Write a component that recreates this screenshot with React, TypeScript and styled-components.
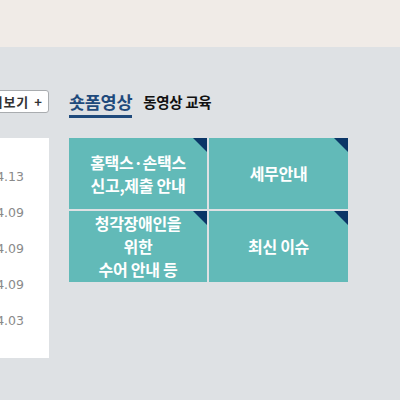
import React from 'react'
import styled, { createGlobalStyle } from 'styled-components'

const GlobalStyle = createGlobalStyle`
  html, body {
    margin: 0;
    padding: 0;
    background: #dee1e4;
    font-family: 'Noto Sans CJK KR', 'Noto Sans', sans-serif;
  }
`

const Page = styled.div`
  width: 400px;
  height: 400px;
  overflow: hidden;
`

const Banner = styled.div`
  height: 47px;
  background: #f0ebe7;
`

const Main = styled.div`
  display: flex;
  padding-top: 43px;
`

const LeftCol = styled.div`
  width: 49px;
  display: flex;
  flex-direction: column;
  align-items: flex-end;
  overflow: hidden;
`

const MoreButton = styled.div`
  flex-shrink: 0;
  height: 21px;
  padding: 0 6px 0 8px;
  display: flex;
  align-items: center;
  white-space: nowrap;
  background: #fff;
  border: 1px solid #a9acaf;
  border-radius: 3px;
  font-size: 13px;
  font-weight: 700;
  letter-spacing: 1px;
  color: #333;
`

const Plus = styled.span`
  margin-left: 5px;
  letter-spacing: 0;
`

const Panel = styled.ul`
  list-style: none;
  margin: 25px 0 0;
  padding: 31px 25px 0 0;
  width: 200px;
  flex-shrink: 0;
  height: 220px;
  background: #fff;
  box-sizing: border-box;
`

const DateItem = styled.li`
  height: 36px;
  text-align: right;
  font-family: 'DejaVu Sans', sans-serif;
  font-size: 12.5px;
  color: #8a8a8a;
  white-space: nowrap;
`

const RightCol = styled.div`
  margin-left: 20px;
  display: flex;
  flex-direction: column;
`

const Tabs = styled.div`
  display: flex;
  align-items: flex-end;
  gap: 11px;
  height: 28px;
`

const Tab = styled.div<{ $active?: boolean }>`
  font-weight: 700;
  font-size: ${p => (p.$active ? '17.5px' : '14.5px')};
  color: ${p => (p.$active ? '#1f4a7c' : '#111')};
  padding-bottom: ${p => (p.$active ? '3px' : '5px')};
  border-bottom: ${p => (p.$active ? '3px solid #1f4a7c' : '3px solid transparent')};
  line-height: 1.2;
  letter-spacing: -0.3px;
`

const Grid = styled.div`
  margin-top: 20px;
  display: grid;
  grid-template-columns: 138px 139px;
  grid-template-rows: 71px 71px;
  gap: 2px;
`

const Tile = styled.div`
  position: relative;
  display: flex;
  align-items: center;
  justify-content: center;
  text-align: center;
  background: #62bab8;
  color: #fff;
  font-weight: 700;
  font-size: 16px;
  line-height: 23px;
  letter-spacing: -0.3px;

  &::after {
    content: '';
    position: absolute;
    top: 0;
    right: 0;
    border-style: solid;
    border-width: 0 14px 14px 0;
    border-color: transparent #0b3667 transparent transparent;
  }
`

const dates = ['2024.04.13', '2024.04.09', '2024.04.09', '2024.04.09', '2024.04.03']

const tiles = [
  ['홈택스·손택스', '신고,제출 안내'],
  ['세무안내'],
  ['청각장애인을', '위한', '수어 안내 등'],
  ['최신 이슈'],
]

export default function App() {
  return (
    <Page>
      <GlobalStyle />
      <Banner />
      <Main>
        <LeftCol>
          <MoreButton>
            전체보기<Plus>+</Plus>
          </MoreButton>
          <Panel>
            {dates.map((d, i) => (
              <DateItem key={i}>{d}</DateItem>
            ))}
          </Panel>
        </LeftCol>
        <RightCol>
          <Tabs>
            <Tab $active>숏폼영상</Tab>
            <Tab>동영상 교육</Tab>
          </Tabs>
          <Grid>
            {tiles.map((lines, i) => (
              <Tile key={i}>
                <div>
                  {lines.map((l, j) => (
                    <div key={j}>{l}</div>
                  ))}
                </div>
              </Tile>
            ))}
          </Grid>
        </RightCol>
      </Main>
    </Page>
  )
}
